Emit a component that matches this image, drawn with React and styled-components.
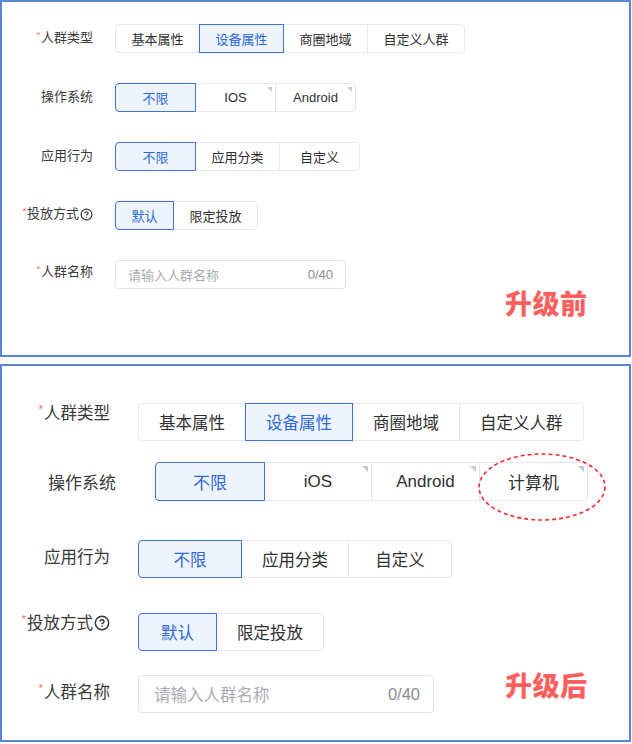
import styled, { createGlobalStyle } from 'styled-components';
import { CircleHelp } from 'lucide-react';

const GlobalStyle = createGlobalStyle`
  body {
    margin: 0;
    background: #fff;
    font-family: "Liberation Sans", "Noto Sans CJK SC", sans-serif;
  }
`;

const Page = styled.div`
  width: 631px;
  display: flex;
  flex-direction: column;
  gap: 7px;
`;

const Panel = styled.section`
  position: relative;
  box-sizing: border-box;
  height: ${p => p.$height}px;
  padding-top: ${p => p.$top}px;
  border: 2px solid #5b85d6;
  --fs: ${p => p.$fs}px;
  --h: ${p => p.$h}px;
  --lh: ${p => p.$lh}px;
  --lw: ${p => p.$lw}px;
  --gap: ${p => p.$gap}px;
  --pad: ${p => p.$pad}px;
  --tri: ${p => p.$tri}px;
`;

const Row = styled.div`
  display: flex;
  align-items: flex-start;
  margin-top: ${p => p.$mt || 0}px;
  ${p => p.$fs && `--fs: ${p.$fs}px;`}
  ${p => p.$h && `--h: ${p.$h}px;`}
  ${p => p.$lw && `--lw: ${p.$lw}px;`}
  ${p => p.$gap && `--gap: ${p.$gap}px;`}
`;

const Label = styled.label`
  box-sizing: border-box;
  flex: none;
  display: flex;
  justify-content: flex-end;
  align-items: center;
  width: var(--lw);
  margin-right: var(--gap);
  margin-top: ${p => p.$dy || 0}px;
  font-size: var(--fs);
  line-height: var(--lh);
  color: #3a3a3a;
  white-space: nowrap;
`;

const Star = styled.span`
  color: #f56c6c;
  font-size: 0.7em;
  line-height: 1;
  position: relative;
  top: -0.25em;
  margin-right: 1px;
`;

const Help = styled(CircleHelp)`
  flex: none;
  margin-left: 1px;
  color: #333;
`;

const Segmented = styled.div`
  display: inline-flex;
  height: var(--h);
`;

const Segment = styled.button`
  position: relative;
  box-sizing: border-box;
  min-width: ${p => p.$min || 0}px;
  height: 100%;
  padding: 0 var(--pad);
  margin: 0 0 0 -1px;
  border: 1px solid ${p => (p.$active ? '#3f73dc' : '#e4e7ed')};
  background: ${p => (p.$active ? '#eef4fe' : '#fff')};
  color: ${p => (p.$active ? '#2d68d8' : '#2f2f2f')};
  font-family: inherit;
  font-size: var(--fs);
  white-space: nowrap;
  z-index: ${p => (p.$active ? 1 : 0)};
  &:first-child {
    margin-left: 0;
    border-radius: 4px 0 0 4px;
  }
  &:last-child {
    border-radius: 0 4px 4px 0;
  }
  ${p =>
    p.$mark &&
    `&::after {
      content: '';
      position: absolute;
      top: 3px;
      right: 3px;
      border-style: solid;
      border-width: 0 var(--tri) var(--tri) 0;
      border-color: transparent #c3c7cf transparent transparent;
    }`}
`;

const Circled = styled.svg`
  position: absolute;
  left: -2px;
  top: -10px;
  width: 128px;
  height: 68px;
  overflow: visible;
  pointer-events: none;
`;

const TextField = styled.div`
  display: flex;
  align-items: center;
  box-sizing: border-box;
  width: ${p => p.$w}px;
  height: var(--h);
  padding: 0 ${p => p.$pr}px 0 ${p => p.$pl}px;
  border: 1px solid #dfe2e8;
  border-radius: 4px;
  background: #fff;
`;

const Input = styled.input`
  flex: 1;
  min-width: 0;
  border: 0;
  outline: 0;
  padding: 0;
  background: transparent;
  font-family: "Noto Sans CJK SC", sans-serif;
  font-size: var(--fs);
  &::placeholder {
    color: #a9acb3;
  }
`;

const Count = styled.span`
  color: #8a8d93;
  font-size: var(--fs);
`;

const Stamp = styled.div`
  position: absolute;
  left: 503px;
  top: ${p => p.$y}px;
  font-family: "Noto Sans CJK SC", sans-serif;
  font-size: 27px;
  font-weight: 900;
  line-height: 1;
  color: #fd5e5e;
  letter-spacing: 0.5px;
`;

function Field({ label, required, help, helpSize, dy, children, ...row }) {
  return (
    <Row {...row}>
      <Label $dy={dy}>
        {required && <Star>*</Star>}
        {label}
        {help && <Help size={helpSize} strokeWidth={2.2} />}
      </Label>
      {children}
    </Row>
  );
}

function Before() {
  return (
    <Panel $height={357} $top={22} $fs={13} $h={29} $lh={28} $lw={91} $gap={22} $pad={15.5} $tri={5}>
      <Field label="人群类型" required>
        <Segmented>
          <Segment>基本属性</Segment>
          <Segment $active>设备属性</Segment>
          <Segment>商圈地域</Segment>
          <Segment>自定义人群</Segment>
        </Segmented>
      </Field>
      <Field label="操作系统" $mt={30}>
        <Segmented>
          <Segment $min={81} $active>不限</Segment>
          <Segment $min={81} $mark>IOS</Segment>
          <Segment $min={81} $mark>Android</Segment>
        </Segmented>
      </Field>
      <Field label="应用行为" $mt={30}>
        <Segmented>
          <Segment $min={81} $active>不限</Segment>
          <Segment $min={81}>应用分类</Segment>
          <Segment $min={81}>自定义</Segment>
        </Segmented>
      </Field>
      <Field label="投放方式" required help helpSize={13} dy={-1} $mt={30}>
        <Segmented>
          <Segment $active>默认</Segment>
          <Segment>限定投放</Segment>
        </Segmented>
      </Field>
      <Field label="人群名称" required dy={-2} $mt={30}>
        <TextField $w={231} $pl={12} $pr={12}>
          <Input placeholder="请输入人群名称" />
          <Count>0/40</Count>
        </TextField>
      </Field>
      <Stamp $y={287}>升级前</Stamp>
    </Panel>
  );
}

function After() {
  return (
    <Panel $height={378} $top={37} $fs={16.5} $h={38} $lh={20} $lw={108} $gap={28} $pad={20} $tri={6}>
      <Field label="人群类型" required>
        <Segmented>
          <Segment>基本属性</Segment>
          <Segment $active>设备属性</Segment>
          <Segment>商圈地域</Segment>
          <Segment>自定义人群</Segment>
        </Segmented>
      </Field>
      <Field label="操作系统" dy={12} $mt={21} $h={39} $fs={17} $lw={114} $gap={39}>
        <Segmented>
          <Segment $min={110} $active>不限</Segment>
          <Segment $min={108} $mark>iOS</Segment>
          <Segment $min={109} $mark>Android</Segment>
          <Segment $min={109} $mark>
            计算机
            <Circled viewBox="0 0 128 68">
              <ellipse cx="64" cy="34" rx="63" ry="33" fill="none" stroke="#f2282f" strokeWidth="1.6" strokeDasharray="4 3" />
            </Circled>
          </Segment>
        </Segmented>
      </Field>
      <Field label="应用行为" dy={7} $mt={39}>
        <Segmented>
          <Segment $min={104} $active>不限</Segment>
          <Segment $min={107}>应用分类</Segment>
          <Segment $min={104}>自定义</Segment>
        </Segmented>
      </Field>
      <Field label="投放方式" required help helpSize={16} $mt={35}>
        <Segmented>
          <Segment $min={79} $active>默认</Segment>
          <Segment>限定投放</Segment>
        </Segmented>
      </Field>
      <Field label="人群名称" required dy={7} $mt={24}>
        <TextField $w={296} $pl={15} $pr={13}>
          <Input placeholder="请输入人群名称" />
          <Count>0/40</Count>
        </TextField>
      </Field>
      <Stamp $y={305}>升级后</Stamp>
    </Panel>
  );
}

export default function App() {
  return (
    <>
      <GlobalStyle />
      <Page>
        <Before />
        <After />
      </Page>
    </>
  );
}
